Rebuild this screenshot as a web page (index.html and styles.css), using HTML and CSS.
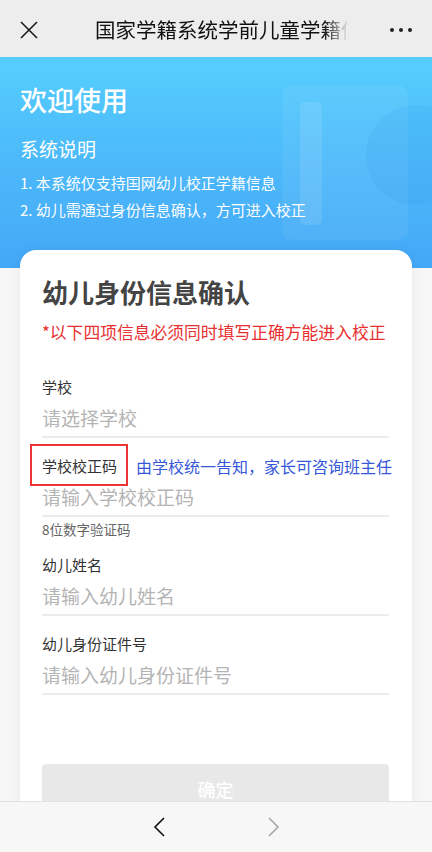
FILE: index.html
```html
<!DOCTYPE html>
<html lang="zh-CN">
<head>
    <meta charset="UTF-8">
    <meta name="viewport" content="width=device-width, initial-scale=1.0">
    <title>国家学籍系统学前儿童学籍信息校正</title>
    <link rel="stylesheet" href="styles.css">
</head>
<body>
    <div class="topbar">
        <svg class="close-icon" width="20" height="20" viewBox="0 0 20 20">
            <path d="M2 2 L18 18 M18 2 L2 18" stroke="#1a1a1a" stroke-width="1.6" fill="none"/>
        </svg>
        <div class="topbar-title">国家学籍系统学前儿童学籍信息校正</div>
        <div class="more-icon"><span></span><span></span><span></span></div>
    </div>

    <div class="page">
        <div class="banner">
            <div class="banner-deco">
                <div class="deco-bar"></div>
                <div class="deco-circle"></div>
            </div>
            <h1 class="banner-title">欢迎使用</h1>
            <div class="banner-sub">系统说明</div>
            <ol class="banner-list">
                <li>1. 本系统仅支持国网幼儿校正学籍信息</li>
                <li>2. 幼儿需通过身份信息确认，方可进入校正</li>
            </ol>
        </div>

        <div class="card">
            <h2 class="card-title">幼儿身份信息确认</h2>
            <div class="card-warn">*以下四项信息必须同时填写正确方能进入校正</div>

            <div class="field">
                <div class="field-label">学校</div>
                <div class="field-input">请选择学校</div>
            </div>

            <div class="field">
                <div class="field-label">
                    <span class="marked">学校校正码</span>
                    <span class="field-tip">由学校统一告知，家长可咨询班主任</span>
                </div>
                <div class="field-input">请输入学校校正码</div>
                <div class="field-hint">8位数字验证码</div>
            </div>

            <div class="field">
                <div class="field-label">幼儿姓名</div>
                <div class="field-input">请输入幼儿姓名</div>
            </div>

            <div class="field">
                <div class="field-label">幼儿身份证件号</div>
                <div class="field-input">请输入幼儿身份证件号</div>
            </div>

            <button class="submit-btn">确定</button>
        </div>
    </div>

    <div class="bottombar">
        <svg width="14" height="20" viewBox="0 0 14 20">
            <path d="M11 1 L2 10 L11 19" stroke="#111" stroke-width="1.6" fill="none"/>
        </svg>
        <svg width="14" height="20" viewBox="0 0 14 20">
            <path d="M3 1 L12 10 L3 19" stroke="#a6a6a6" stroke-width="1.6" fill="none"/>
        </svg>
    </div>
</body>
</html>
```

FILE: styles.css
```css
* {
    box-sizing: border-box;
}

body {
    margin: 0;
    height: 852px;
    display: flex;
    flex-direction: column;
    font-family: "Noto Sans CJK SC", "Noto Sans", sans-serif;
    background-color: #f6f6f6;
    overflow: hidden;
}

.topbar {
    height: 57px;
    flex-shrink: 0;
    display: flex;
    align-items: center;
    padding: 0 20px 0 19px;
    background-color: #ededed;
}

.close-icon {
    flex-shrink: 0;
    margin-top: 2px;
}

.topbar-title {
    width: 254px;
    margin-left: 56px;
    font-size: 20.5px;
    color: #111;
    white-space: nowrap;
    overflow: hidden;
    -webkit-mask-image: linear-gradient(to right, #000 90%, transparent 100%);
    mask-image: linear-gradient(to right, #000 90%, transparent 100%);
}

.more-icon {
    margin-left: auto;
    display: flex;
    gap: 5px;
    margin-top: 2px;
}

.more-icon span {
    width: 4px;
    height: 4px;
    border-radius: 50%;
    background-color: #222;
}

.page {
    flex: 1;
    overflow: hidden;
}

.banner {
    position: relative;
    height: 211px;
    padding: 25px 20px 0;
    color: #fff;
    background: linear-gradient(to bottom, #55cefd 0%, #4cb9fa 50%, #44a8f6 100%);
    overflow: hidden;
}

.banner-deco {
    position: absolute;
    left: 282px;
    top: 28px;
    width: 126px;
    height: 155px;
    border-radius: 10px;
    background-color: rgba(255, 255, 255, 0.06);
}

.deco-bar {
    position: absolute;
    left: 18px;
    top: 17px;
    width: 22px;
    height: 123px;
    border-radius: 5px;
    background-color: rgba(255, 255, 255, 0.1);
}

.deco-circle {
    position: absolute;
    left: 84px;
    top: 20px;
    width: 100px;
    height: 100px;
    border-radius: 50%;
    background-color: rgba(40, 140, 230, 0.1);
}

.banner-title {
    position: relative;
    margin: 0;
    font-size: 27px;
    line-height: 36px;
    font-weight: 500;
}

.banner-sub {
    position: relative;
    margin-top: 17px;
    font-size: 19px;
    line-height: 28px;
}

.banner-list {
    position: relative;
    list-style: none;
    margin: 6px 0 0;
    padding: 0;
    font-size: 15px;
    line-height: 27px;
}

.card {
    margin: -18px 20px 0;
    padding: 24px 23px 40px 22px;
    position: relative;
    background-color: #fff;
    border-radius: 16px 16px 0 0;
    box-shadow: 0 0 10px rgba(0, 0, 0, 0.06);
}

.card-title {
    margin: 0;
    font-size: 26px;
    line-height: 36px;
    font-weight: 700;
    color: #444;
}

.card-warn {
    margin-top: 10px;
    font-size: 16.8px;
    line-height: 24px;
    color: #e8302f;
}

.field {
    margin-top: 17px;
}

.card-warn + .field {
    margin-top: 32px;
}

.field-label {
    display: flex;
    align-items: center;
    font-size: 15px;
    line-height: 22px;
    color: #333;
    white-space: nowrap;
}

.marked {
    position: relative;
    flex-shrink: 0;
}

.marked::before {
    content: "";
    position: absolute;
    left: -12px;
    right: -11px;
    top: -11px;
    bottom: -9px;
    border: 2px solid #ee3535;
}

.field-tip {
    flex-shrink: 0;
    margin-left: 19px;
    font-size: 16px;
    color: #3557d8;
}

.field-input {
    margin-top: 5px;
    padding-bottom: 3px;
    font-size: 19px;
    line-height: 30px;
    color: #b4b4b4;
    border-bottom: 2px solid #ececec;
}

.field-hint {
    margin-top: 4px;
    font-size: 13.5px;
    line-height: 16px;
    color: #666;
}

.submit-btn {
    display: block;
    width: 100%;
    height: 50px;
    margin-top: 69px;
    border: none;
    border-radius: 4px;
    background-color: #e8e8e8;
    color: #fff;
    font-family: inherit;
    font-size: 18px;
    font-weight: 500;
}

.bottombar {
    height: 51px;
    flex-shrink: 0;
    display: flex;
    align-items: center;
    justify-content: center;
    gap: 99px;
    background-color: #f7f7f7;
    border-top: 1px solid #e2e2e2;
}
```
